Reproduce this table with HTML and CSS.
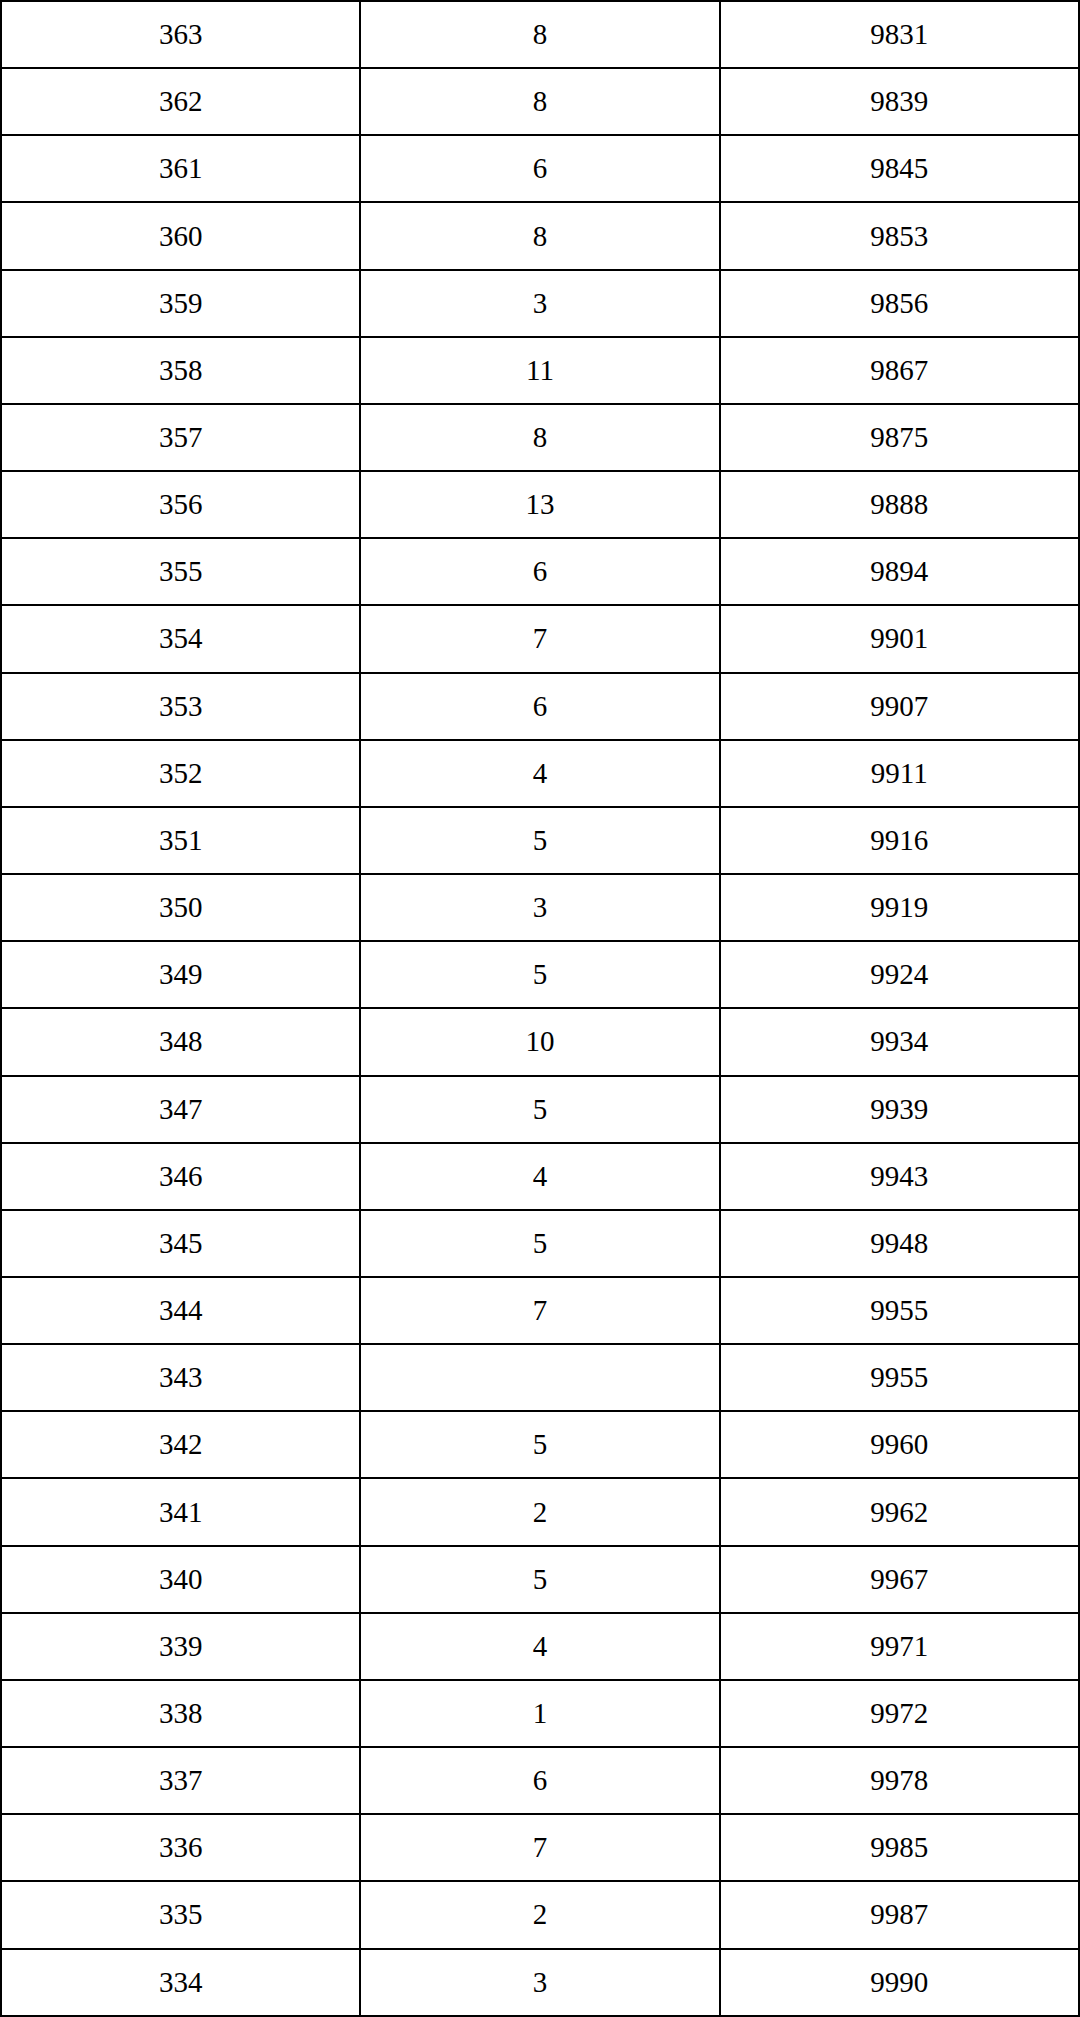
FILE: index.html
```html
<!DOCTYPE html>
<html>
<head>
<meta charset="utf-8">
<link rel="stylesheet" href="styles.css">
</head>
<body>
<table class="score-table">
<tbody>
<tr><td>363</td><td>8</td><td>9831</td></tr>
<tr><td>362</td><td>8</td><td>9839</td></tr>
<tr><td>361</td><td>6</td><td>9845</td></tr>
<tr><td>360</td><td>8</td><td>9853</td></tr>
<tr><td>359</td><td>3</td><td>9856</td></tr>
<tr><td>358</td><td>11</td><td>9867</td></tr>
<tr><td>357</td><td>8</td><td>9875</td></tr>
<tr><td>356</td><td>13</td><td>9888</td></tr>
<tr><td>355</td><td>6</td><td>9894</td></tr>
<tr><td>354</td><td>7</td><td>9901</td></tr>
<tr><td>353</td><td>6</td><td>9907</td></tr>
<tr><td>352</td><td>4</td><td>9911</td></tr>
<tr><td>351</td><td>5</td><td>9916</td></tr>
<tr><td>350</td><td>3</td><td>9919</td></tr>
<tr><td>349</td><td>5</td><td>9924</td></tr>
<tr><td>348</td><td>10</td><td>9934</td></tr>
<tr><td>347</td><td>5</td><td>9939</td></tr>
<tr><td>346</td><td>4</td><td>9943</td></tr>
<tr><td>345</td><td>5</td><td>9948</td></tr>
<tr><td>344</td><td>7</td><td>9955</td></tr>
<tr><td>343</td><td></td><td>9955</td></tr>
<tr><td>342</td><td>5</td><td>9960</td></tr>
<tr><td>341</td><td>2</td><td>9962</td></tr>
<tr><td>340</td><td>5</td><td>9967</td></tr>
<tr><td>339</td><td>4</td><td>9971</td></tr>
<tr><td>338</td><td>1</td><td>9972</td></tr>
<tr><td>337</td><td>6</td><td>9978</td></tr>
<tr><td>336</td><td>7</td><td>9985</td></tr>
<tr><td>335</td><td>2</td><td>9987</td></tr>
<tr><td>334</td><td>3</td><td>9990</td></tr>
</tbody>
</table>
</body>
</html>
```
FILE: styles.css
```css
html, body {
  margin: 0;
  padding: 0;
  background: #ffffff;
}
.score-table {
  width: 1080px;
  height: 2017px;
  border-collapse: collapse;
  table-layout: fixed;
  font-family: "Liberation Serif", "Times New Roman", serif;
  font-size: 29px;
  color: #000000;
}
.score-table td {
  width: 33.333%;
  border: 2px solid #000000;
  text-align: center;
  vertical-align: middle;
  padding: 0;
}
```
